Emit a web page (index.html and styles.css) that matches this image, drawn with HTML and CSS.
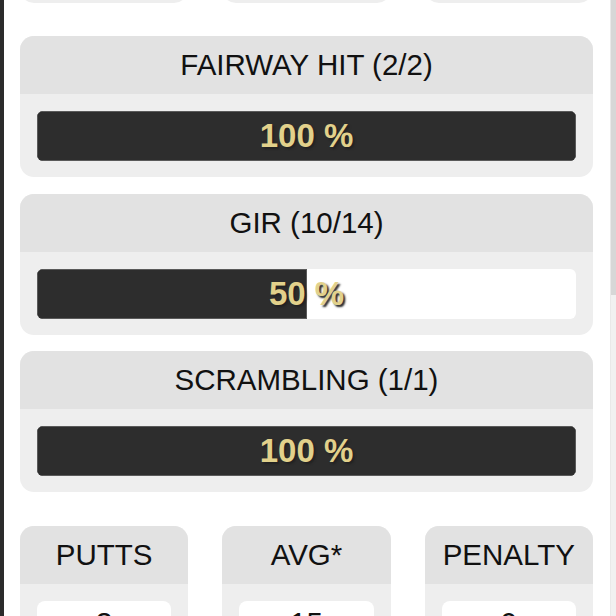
FILE: index.html
```html
<!DOCTYPE html>
<html>
<head>
<meta charset="utf-8">
<link rel="stylesheet" href="styles.css">
</head>
<body>
<div class="frame">
  <div class="edge"></div>
  <main class="page">
    <div class="stat-row stat-row-top">
      <div class="stat-card stat-card-clipped"></div>
      <div class="stat-card stat-card-clipped"></div>
      <div class="stat-card stat-card-clipped"></div>
    </div>

    <div class="prog-list">
      <section class="prog-card">
        <div class="card-head">FAIRWAY HIT (2/2)</div>
        <div class="card-body">
          <div class="bar">
            <div class="bar-fill" style="width:100%"></div>
            <span class="bar-label">100 %</span>
          </div>
        </div>
      </section>
      <section class="prog-card">
        <div class="card-head">GIR (10/14)</div>
        <div class="card-body">
          <div class="bar">
            <div class="bar-fill" style="width:50%"></div>
            <span class="bar-label">50 %</span>
          </div>
        </div>
      </section>
      <section class="prog-card">
        <div class="card-head">SCRAMBLING (1/1)</div>
        <div class="card-body">
          <div class="bar">
            <div class="bar-fill" style="width:100%"></div>
            <span class="bar-label">100 %</span>
          </div>
        </div>
      </section>
    </div>

    <div class="stat-row">
      <div class="stat-card"><div class="card-head">PUTTS</div><div class="card-body"><div class="value-box">3</div></div></div>
      <div class="stat-card"><div class="card-head">AVG*</div><div class="card-body"><div class="value-box">15</div></div></div>
      <div class="stat-card"><div class="card-head">PENALTY</div><div class="card-body"><div class="value-box">0</div></div></div>
    </div>
  </main>
  <div class="scrollbar"><div class="scroll-thumb"></div></div>
</div>
</body>
</html>
```

FILE: styles.css
```css
* { box-sizing: border-box; }
html, body { margin: 0; padding: 0; background: #ffffff; }
body { font-family: "Liberation Sans", Arial, sans-serif; color: #111; }

.frame {
  display: flex;
  width: 616px;
  height: 616px;
  overflow: hidden;
  background: #fff;
}
.edge { width: 4px; flex: none; background: #2b2b2b; }
.page {
  flex: 1;
  min-width: 0;
  padding: 0 17px 0 16px;
  display: flex;
  flex-direction: column;
}
.scrollbar {
  width: 6px;
  flex: none;
  background: #f1f1f1;
  border-left: 1px solid #e9e9e9;
}
.scroll-thumb { height: 295px; background: #d7d7d7; }

.stat-row {
  display: grid;
  grid-template-columns: 1fr 1fr 1fr;
  column-gap: 34px;
  flex: none;
}
.stat-row-top { margin-top: -145px; margin-bottom: 33px; }
.stat-card-clipped { height: 148px; }

.stat-card, .prog-card {
  border-radius: 14px;
  overflow: hidden;
  background: #eeeeee;
}
.card-head {
  height: 58px;
  line-height: 58px;
  background: #e2e2e2;
  text-align: center;
  font-size: 29.5px;
  color: #111;
  white-space: nowrap;
}
.stat-card .card-body { padding: 17px; }
.value-box {
  height: 56px;
  background: #fff;
  border-radius: 8px;
  padding-top: 5px;
  text-align: center;
  font-size: 29.5px;
  line-height: 34px;
  color: #111;
}

.prog-list {
  display: flex;
  flex-direction: column;
  gap: 16.5px;
  margin-bottom: 34px;
  flex: none;
}
.prog-card .card-body { padding: 17px 17px 16px; }
.bar {
  position: relative;
  height: 50px;
  background: #fff;
  border-radius: 6px;
  overflow: hidden;
}
.bar-fill {
  height: 100%;
  background: #2d2d2d;
  box-shadow: inset 0 0 0 1px #5a5a5a;
}
.bar-label {
  position: absolute;
  inset: 0;
  display: flex;
  align-items: center;
  justify-content: center;
  font-weight: bold;
  font-size: 33px;
  color: #e2d18b;
  text-shadow: 2px 2px 2px #222;
}
```
